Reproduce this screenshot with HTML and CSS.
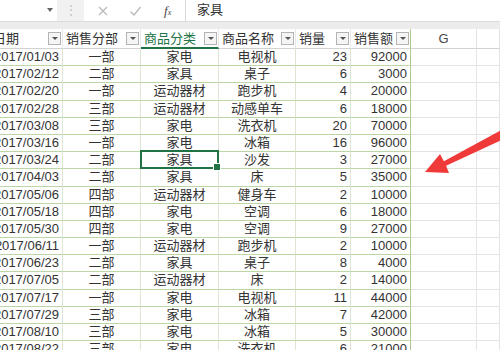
FILE: index.html
```html
<!DOCTYPE html>
<html lang="zh-CN">
<head>
    <meta charset="UTF-8">
    <meta name="viewport" content="width=device-width, initial-scale=1.0">
    <title>销售表</title>
    <link rel="stylesheet" href="styles.css">
</head>
<body>
    <div class="formula-bar">
        <div class="name-box"><span class="caret"></span></div>
        <div class="grip">⋮</div>
        <div class="fx-tools">
            <svg class="tool" width="12" height="12" viewBox="0 0 12 12"><path d="M2 2 L10 10 M10 2 L2 10" stroke="#b8b8b8" stroke-width="1.3" fill="none"/></svg>
            <svg class="tool" width="13" height="12" viewBox="0 0 13 12"><path d="M1.5 6.5 L5 10 L11.5 2" stroke="#b8b8b8" stroke-width="1.3" fill="none"/></svg>
            <span class="fx">f<small>x</small></span>
        </div>
        <div class="formula-input">家具</div>
    </div>
    <div class="bar-gap"></div>

    <div class="sheet">
        <div class="row head">
            <div class="cell hcell"><span>日期</span><span class="drop"></span></div>
            <div class="cell hcell"><span>销售分部</span><span class="drop"></span></div>
            <div class="cell hcell active"><span>商品分类</span><span class="drop"></span></div>
            <div class="cell hcell"><span>商品名称</span><span class="drop"></span></div>
            <div class="cell hcell"><span>销量</span><span class="drop"></span></div>
            <div class="cell hcell last"><span>销售额</span><span class="drop"></span></div>
            <div class="cell col-letter">G</div>
            <div class="cell col-letter"></div>
        </div>
    </div>

    <svg class="arrow" width="500" height="350" viewBox="0 0 500 350">
        <polygon points="425,172 440,154 443.9,161.3 504,128.5 508,137 446.1,165.7 449,173" fill="#f03a3a"/>
    </svg>

    <script>
        var rows = [
            ['2017/01/03', '一部', '家电', '电视机', 23, 92000],
            ['2017/02/12', '二部', '家具', '桌子', 6, 3000],
            ['2017/02/20', '一部', '运动器材', '跑步机', 4, 20000],
            ['2017/02/28', '三部', '运动器材', '动感单车', 6, 18000],
            ['2017/03/08', '三部', '家电', '洗衣机', 20, 70000],
            ['2017/03/16', '一部', '家电', '冰箱', 16, 96000],
            ['2017/03/24', '二部', '家具', '沙发', 3, 27000],
            ['2017/04/03', '二部', '家具', '床', 5, 35000],
            ['2017/05/06', '四部', '运动器材', '健身车', 2, 10000],
            ['2017/05/18', '四部', '家电', '空调', 6, 18000],
            ['2017/05/30', '四部', '家电', '空调', 9, 27000],
            ['2017/06/11', '一部', '运动器材', '跑步机', 2, 10000],
            ['2017/06/23', '二部', '家具', '桌子', 8, 4000],
            ['2017/07/05', '二部', '运动器材', '床', 2, 14000],
            ['2017/07/17', '一部', '家电', '电视机', 11, 44000],
            ['2017/07/29', '三部', '家电', '冰箱', 7, 42000],
            ['2017/08/10', '三部', '家电', '冰箱', 5, 30000],
            ['2017/08/22', '三部', '家电', '洗衣机', 6, 21000]
        ];
        var classes = ['num', 'mid', 'mid', 'mid', 'num', 'num last'];
        var sheet = document.querySelector('.sheet');

        rows.forEach(function(r, i) {
            var row = document.createElement('div');
            row.className = 'row';
            r.forEach(function(v, j) {
                var c = document.createElement('div');
                c.className = 'cell tcell ' + classes[j];
                if (i === 6 && j === 2) c.className += ' sel';
                c.textContent = v;
                row.appendChild(c);
            });
            for (var k = 0; k < 2; k++) {
                var e = document.createElement('div');
                e.className = 'cell empty';
                row.appendChild(e);
            }
            sheet.appendChild(row);
        });
    </script>
</body>
</html>
```

FILE: styles.css
```css
* {
    box-sizing: border-box;
}
body {
    margin: 0;
    width: 500px;
    height: 350px;
    overflow: hidden;
    position: relative;
    background: #fff;
    font-family: "Liberation Sans", "Noto Sans CJK SC", sans-serif;
    font-size: 13px;
    color: #333;
}
.formula-bar {
    display: flex;
    height: 21px;
    background: #fff;
}
.name-box {
    width: 57px;
    position: relative;
}
.caret {
    position: absolute;
    left: 47px;
    top: 8px;
    border-left: 3px solid transparent;
    border-right: 3px solid transparent;
    border-top: 4px solid #666;
}
.grip {
    width: 27px;
    background: #f1f1f1;
    color: #c2c2c2;
    text-align: center;
    line-height: 20px;
    font-size: 12px;
}
.fx-tools {
    width: 101px;
    display: flex;
    align-items: center;
    padding-left: 13px;
    gap: 20px;
}
.fx {
    font-family: "Liberation Serif", serif;
    font-style: italic;
    font-size: 13px;
    color: #444;
    margin-left: 2px;
}
.fx small {
    font-size: 8px;
}
.formula-input {
    flex: 1;
    border-left: 1px solid #dadada;
    padding-left: 11px;
    line-height: 19px;
    color: #333;
}
.bar-gap {
    height: 8px;
    background: #ececec;
    border-top: 1px solid #dcdcdc;
}
.sheet {
    margin-left: -10px;
}
.row {
    display: grid;
    grid-template-columns: 73px 78px 78px 77px 55px 60px 66px 1fr;
    height: 17.2px;
}
.row.head {
    height: 20px;
}
.cell {
    border-right: 1px solid #e2e2e2;
    border-bottom: 1px solid #e2e2e2;
    white-space: nowrap;
    overflow: hidden;
    line-height: 16px;
}
.hcell {
    display: flex;
    align-items: center;
    justify-content: space-between;
    padding: 0 1px 0 3px;
    border-right: 1px solid #e8e8e8;
    border-bottom: 1px solid #d2d2d2;
    line-height: 19px;
}
.hcell.active {
    color: #217346;
    border-bottom: 2px solid #217346;
}
.hcell.last {
    border-right-color: #a9c98f;
}
.drop {
    width: 13px;
    height: 13px;
    border: 1px solid #b4b4b4;
    background: #f5f5f5;
    position: relative;
    flex: none;
}
.drop::after {
    content: '';
    position: absolute;
    left: 3px;
    top: 4px;
    border-left: 3px solid transparent;
    border-right: 3px solid transparent;
    border-top: 3px solid #555;
}
.col-letter {
    text-align: center;
    line-height: 19px;
    border-bottom: 1px solid #d2d2d2;
    color: #444;
}
.tcell {
    border-bottom: 1px solid #bcd6a6;
    border-right: 1px solid #dde6d5;
}
.tcell.last {
    border-right: 1px solid #a9c98f;
}
.num {
    text-align: right;
    padding-right: 3px;
}
.mid {
    text-align: center;
}
.sel {
    position: relative;
    overflow: visible;
}
.sel::after {
    content: '';
    position: absolute;
    left: -1px;
    top: -2px;
    right: -1px;
    bottom: -1px;
    border: 2px solid #217346;
}
.sel::before {
    content: '';
    position: absolute;
    right: -3px;
    bottom: -3px;
    width: 6px;
    height: 6px;
    background: #217346;
    border: 1px solid #fff;
    z-index: 2;
}
.empty {
    border-right: 1px solid #e4e4e4;
    border-bottom: 1px solid #e4e4e4;
}
.arrow {
    position: absolute;
    left: 0;
    top: 0;
    pointer-events: none;
}
```
